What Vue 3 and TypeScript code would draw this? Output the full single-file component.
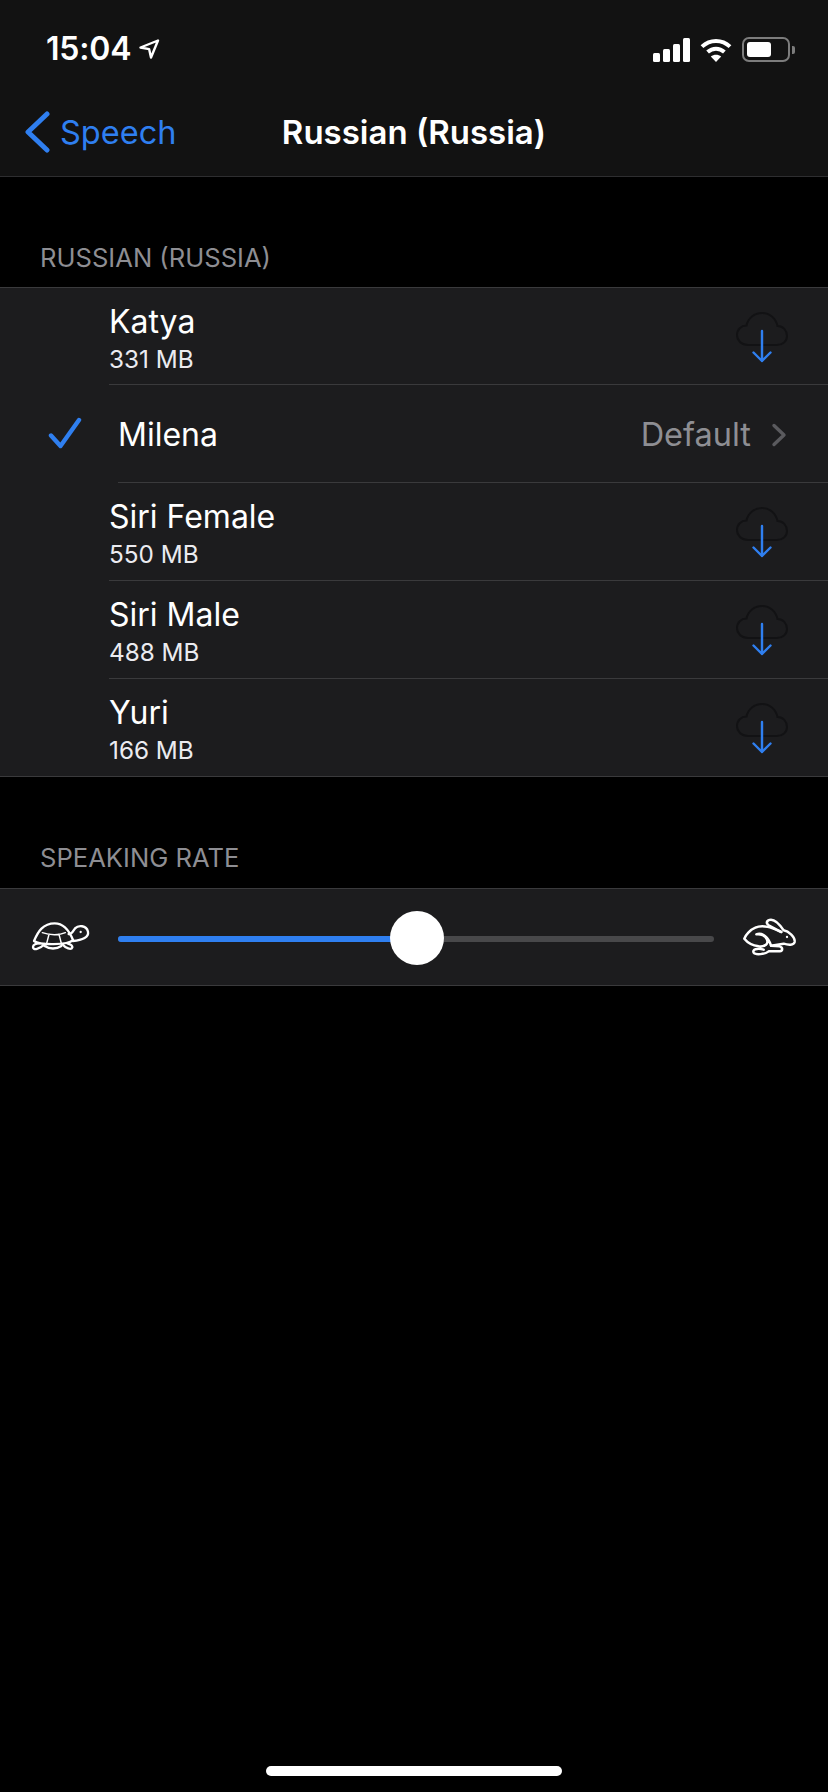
<template>
  <div class="screen">
    <header class="top">
      <div class="status">
        <div class="status-left">
          <span class="time">15:04</span>
          <svg class="loc" width="22" height="22" viewBox="0 0 22 22"><path d="M20 2.500 2.500 9.500l8.600 1.600 1.900 8.400z" fill="none" stroke="#fff" stroke-width="2.400" stroke-linejoin="round" /></svg>
        </div>
        <div class="status-right">
          <svg width="37" height="24" viewBox="0 0 37 24" fill="#fff">
            <rect x="0" y="15" width="7" height="9" rx="1.500" />
            <rect x="10" y="11" width="7" height="13" rx="1.500" />
            <rect x="20" y="6" width="7" height="18" rx="1.500" />
            <rect x="30" y="0" width="7" height="24" rx="1.500" />
          </svg>
          <svg width="32" height="24" viewBox="0 0 32 24" fill="none" stroke="#fff" stroke-width="4">
            <path d="M2 8.600C10 1 22 1 30 8.600" />
            <path d="M7.600 14C12.600 9.500 19.400 9.500 24.400 14" />
            <path d="M16 24l-5.200-5.400c3-2.400 7.400-2.400 10.400 0z" fill="#fff" stroke="none" />
          </svg>
          <div class="battery">
            <div class="battery-body"><div class="battery-fill" :style="{ width: battery + '%' }"></div></div>
            <div class="battery-cap"></div>
          </div>
        </div>
      </div>
      <nav class="nav">
        <div class="back">
          <svg width="26" height="42" viewBox="0 0 26 42"><path d="M23 3 4 21l19 18" fill="none" stroke="#2f7ff0" stroke-width="5" stroke-linecap="round" stroke-linejoin="round" /></svg>
          <span>Speech</span>
        </div>
        <div class="title">Russian (Russia)</div>
      </nav>
    </header>

    <div class="section-label first">RUSSIAN (RUSSIA)</div>
    <ul class="group">
      <li v-for="v in voices" :key="v.name" class="row" :class="{ selected: v.selected }">
        <template v-if="v.selected">
          <svg class="check" width="34" height="32" viewBox="0 0 34 32"><path d="M3 18.500 12.500 29 31 3" fill="none" stroke="#2f7ff0" stroke-width="4.400" stroke-linecap="round" stroke-linejoin="round" /></svg>
          <div class="row-inner">
            <span class="name">{{ v.name }}</span>
            <span class="default">Default</span>
            <svg width="16" height="24" viewBox="0 0 16 24"><path d="M3 2.500 13 12 3 21.500" fill="none" stroke="#5a5a5e" stroke-width="3.400" stroke-linecap="round" stroke-linejoin="round" /></svg>
          </div>
        </template>
        <div v-else class="row-inner">
          <div class="info">
            <span class="name">{{ v.name }}</span>
            <span class="size">{{ v.size }}</span>
          </div>
          <svg class="cloud" width="54" height="52" viewBox="0 0 54 52" fill="none">
            <path d="M13 34C6.500 34 2 29.500 2 24c0-5.500 4.200-9.500 9.500-9.500C13 7 19.500 2 27 2c8 0 14 5.500 15.500 13C48 15 52 19.500 52 25s-4.500 9-10 9z" stroke="#121214" stroke-width="2" />
            <path d="M27 20v30M18.500 41.500 27 50l8.500-8.500" stroke="#2f7ff0" stroke-width="2.400" stroke-linecap="round" stroke-linejoin="round" />
          </svg>
        </div>
      </li>
    </ul>

    <div class="section-label">SPEAKING RATE</div>
    <div class="group slider-row">
      <svg width="60" height="34" viewBox="94 180 180 102" fill="none" stroke="#fff" stroke-width="7" stroke-linejoin="round" stroke-linecap="round">
        <path d="M103 243C115 215 130 190 165 190C195 190 210 215 220 240C205 256 120 256 103 243z" />
        <path d="M128 218C150 226 180 226 197 218M148 223L140 254M178 223L186 254" stroke-width="4.500" />
        <path d="M207 222C216 224 220 214 226 205C236 195 260 195 265 215C268 231 250 240 219 243" />
        <path d="M188 253C198 265 215 271 218 262C219 255 210 252 203 250" />
        <path d="M135 252C120 268 100 272 100 261C100 254 110 250 120 250M135 258C150 268 170 268 185 258" />
        <circle cx="243" cy="216" r="3.500" fill="#fff" stroke="none" />
      </svg>
      <div class="track">
        <div class="track-fill" :style="{ width: rate + '%' }"></div>
        <div class="thumb" :style="{ left: rate + '%' }"></div>
      </div>
      <svg width="55" height="40" viewBox="125 80 165 120" fill="none" stroke="#fff" stroke-width="7.500" stroke-linejoin="round" stroke-linecap="round">
        <path d="M243 125L205 105C195 98 200 88 212 88C225 88 240 105 250 120C265 122 285 140 283 155C280 165 265 165 250 160L212 166" />
        <path d="M243 125C220 115 190 100 165 112C150 118 135 135 132 145C140 155 155 165 175 168C195 170 205 160 200 148C195 135 180 130 168 132C185 125 205 140 212 166L238 168C248 171 248 182 238 183L205 183C195 192 165 195 160 187C155 178 170 172 190 178" />
        <circle cx="260" cy="140" r="3.500" fill="#fff" stroke="none" />
      </svg>
    </div>

    <div class="home-bar"></div>
  </div>
</template>

<script setup lang="ts">
import { ref } from 'vue'

interface Voice {
  name: string
  size?: string
  selected?: boolean
}

const voices: Voice[] = [
  { name: 'Katya', size: '331 MB' },
  { name: 'Milena', selected: true },
  { name: 'Siri Female', size: '550 MB' },
  { name: 'Siri Male', size: '488 MB' },
  { name: 'Yuri', size: '166 MB' },
]

const battery = ref(64)
const rate = ref(50.25)
</script>

<style>
html, body { background: #000; }
</style>

<style scoped>
.screen {
  position: relative;
  height: 1792px;
  overflow: hidden;
  background: #000;
  font-family: Inter, "Liberation Sans", sans-serif;
  color: #fff;
}
.top {
  height: 177px;
  box-sizing: border-box;
  background: #121212;
  border-bottom: 1px solid #2e2e30;
}
.status {
  height: 88px;
  box-sizing: border-box;
  display: flex;
  justify-content: space-between;
  align-items: flex-start;
  padding: 30px 33px 0 46px;
}
.status-left { display: flex; align-items: center; gap: 7px; }
.time { font-size: 32px; line-height: 38px; font-weight: 600; letter-spacing: -0.2px; }
.status-right { display: flex; align-items: center; gap: 10px; margin-top: 7px; }
.battery { display: flex; align-items: center; gap: 2px; }
.battery-body {
  width: 48px;
  height: 25px;
  box-sizing: border-box;
  padding: 3px;
  border: 2px solid #7c7c7c;
  border-radius: 7px;
}
.battery-fill { height: 100%; background: #fff; border-radius: 3px; }
.battery-cap { width: 3px; height: 8px; background: #7c7c7c; border-radius: 0 2px 2px 0; }
.nav {
  position: relative;
  display: flex;
  align-items: center;
  height: 88px;
  padding-left: 24px;
}
.back { display: flex; align-items: center; gap: 10px; color: #2f7ff0; font-size: 32.500px; }
.title {
  position: absolute;
  left: 0;
  right: 0;
  text-align: center;
  font-size: 33px;
  font-weight: 600;
}
.section-label {
  box-sizing: border-box;
  height: 111px;
  padding: 66px 0 0 40px;
  font-size: 25.600px;
  line-height: 30px;
  color: #8e8e93;
}
.section-label.first { height: 110px; padding-top: 66px; }
.group {
  margin: 0;
  padding: 0;
  list-style: none;
  background: #1c1c1e;
  border-top: 1px solid #3a3a3c;
  border-bottom: 1px solid #3a3a3c;
}
.row { position: relative; height: 98px; padding-left: 109px; }
.row:first-child { height: 97px; }
.row-inner {
  box-sizing: border-box;
  height: 100%;
  display: flex;
  align-items: center;
  padding-right: 41px;
  border-bottom: 1px solid #3a3a3c;
}
.row:last-child { height: 97px; }
.row:last-child .row-inner { border-bottom: none; }
.row.selected { padding-left: 118px; }
.row.selected .row-inner { padding-top: 2px; }
.row.selected .name { flex: 1; }
.check { position: absolute; left: 48px; top: 32px; }
.info { flex: 1; display: flex; flex-direction: column; padding-top: 2px; }
.name { font-size: 32px; line-height: 40px; }
.size { font-size: 24.300px; line-height: 28px; margin-top: 3px; color: #ebebf0; }
.default { font-size: 32.500px; color: #8e8e93; margin-right: 20px; }
.cloud { align-self: flex-start; margin: 23px -2px 0 0; }
.slider-row {
  display: flex;
  align-items: center;
  height: 98px;
  box-sizing: border-box;
  padding: 0 31px;
}
.track {
  position: relative;
  flex: 1;
  height: 6px;
  margin: 3px 28px 0 27px;
  border-radius: 3px;
  background: #48484a;
}
.track-fill { height: 100%; background: #2f7ff0; border-radius: 3px; }
.thumb {
  position: absolute;
  top: 0;
  width: 54px;
  height: 54px;
  border-radius: 50%;
  background: #fff;
  transform: translate(-50%, calc(-50% + 2px));
}
.home-bar {
  position: absolute;
  left: 266px;
  bottom: 16px;
  width: 296px;
  height: 10px;
  border-radius: 5px;
  background: #fff;
}
</style>
